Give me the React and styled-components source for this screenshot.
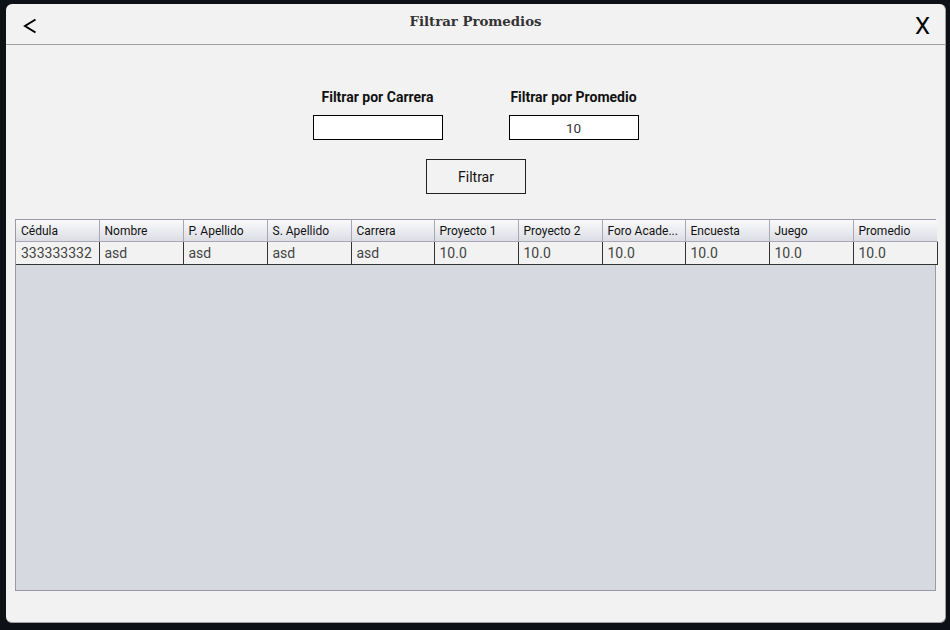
import React from "react";
import styled, { createGlobalStyle } from "styled-components";

const Global = createGlobalStyle`
  html, body { margin: 0; padding: 0; background: #0d1117; }
  body { width: 950px; height: 630px; overflow: hidden; }
`;

const Window = styled.div`
  margin: 4px 0 0 6px;
  width: 939px;
  height: 618px;
  background: #f2f2f2;
  border-radius: 6px;
  border-right: 1px solid #a0a0a0;
  border-bottom: 1px solid #a0a0a0;
  display: flex;
  flex-direction: column;
  overflow: hidden;
  font-family: Roboto, "Liberation Sans", sans-serif;
`;

const TitleBar = styled.div`
  height: 40px;
  flex: none;
  border-bottom: 1px solid #a0a0a0;
  display: flex;
  align-items: center;
  justify-content: space-between;
  padding: 0 15px 0 17px;
  position: relative;
`;

const Title = styled.div`
  position: absolute;
  left: 0;
  right: 0;
  top: 10px;
  text-align: center;
  font-family: "DejaVu Serif", "Liberation Serif", serif;
  font-weight: bold;
  font-size: 13.3px;
  color: #333;
  pointer-events: none;
`;

const IconButton = styled.button`
  border: none;
  background: none;
  padding: 0;
  display: flex;
  align-items: center;
  color: #000;
  cursor: pointer;
  margin-top: 3px;
`;

const CloseGlyph = styled.span`
  font-family: Roboto, "Liberation Sans", sans-serif;
  font-size: 24px;
  line-height: 24px;
  color: #000;
`;

const Content = styled.div`
  flex: 1;
  display: flex;
  flex-direction: column;
  align-items: center;
  padding: 44px 9px 31px 9px;
`;

const Filters = styled.div`
  display: flex;
  gap: 66px;
`;

const Field = styled.div`
  width: 130px;
  display: flex;
  flex-direction: column;
  align-items: center;
`;

const Label = styled.div`
  font-weight: bold;
  font-size: 14px;
  color: #111;
  white-space: nowrap;
  height: 17px;
  line-height: 17px;
  margin-bottom: 9px;
`;

const Input = styled.input`
  box-sizing: border-box;
  width: 130px;
  height: 25px;
  border: 1px solid #000;
  background: #fff;
  text-align: center;
  font-family: Roboto, "Liberation Sans", sans-serif;
  font-size: 13.5px;
  color: #333;
  outline: none;
`;

const Button = styled.button`
  box-sizing: border-box;
  margin-top: 19px;
  width: 100px;
  height: 35px;
  border: 1px solid #222;
  background: #f2f2f2;
  font-family: Roboto, "Liberation Sans", sans-serif;
  font-size: 14px;
  color: #111;
  margin-left: 1px;
`;

const TableBox = styled.div`
  margin-top: 25px;
  align-self: stretch;
  flex: 1;
  background: #d6d9e0;
  border: 1px solid #9a9aa6;
`;

const Table = styled.table`
  width: 921px;
  table-layout: fixed;
  border-collapse: collapse;
`;

const Th = styled.th`
  height: 21px;
  padding: 0 0 0 5px;
  text-align: left;
  font-weight: normal;
  font-size: 12px;
  color: #111;
  background: linear-gradient(#fafafc, #dcdde4);
  border-right: 1px solid #a8a8b4;
  border-bottom: 1px solid #a8a8b4;
  white-space: nowrap;
  overflow: hidden;
  text-overflow: ellipsis;
  &:last-child { border-right: none; }
`;

const Td = styled.td`
  height: 22px;
  padding: 0 0 0 5px;
  font-size: 14px;
  color: #444;
  background: #f2f2f2;
  border: 1px solid #333;
  border-top: none;
  &:first-child { border-left: none; }
  white-space: nowrap;
  overflow: hidden;
`;

const columns = ["Cédula", "Nombre", "P. Apellido", "S. Apellido", "Carrera", "Proyecto 1", "Proyecto 2", "Foro Académico", "Encuesta", "Juego", "Promedio"];
const widths = [83, 84, 84, 84, 83, 84, 84, 83, 84, 84, 84];
const rows = [["333333332", "asd", "asd", "asd", "asd", "10.0", "10.0", "10.0", "10.0", "10.0", "10.0"]];

export default function App() {
  return (
    <>
      <Global />
      <Window>
        <TitleBar>
          <IconButton>
            <svg width="14" height="16" viewBox="0 0 14 16">
              <path d="M12.5 1.5 L2 8 L12.5 14.5" fill="none" stroke="#000" strokeWidth="2" />
            </svg>
          </IconButton>
          <Title>Filtrar Promedios</Title>
          <IconButton>
            <CloseGlyph>X</CloseGlyph>
          </IconButton>
        </TitleBar>
        <Content>
          <Filters>
            <Field>
              <Label>Filtrar por Carrera</Label>
              <Input defaultValue="" />
            </Field>
            <Field>
              <Label>Filtrar por Promedio</Label>
              <Input defaultValue="10" />
            </Field>
          </Filters>
          <Button>Filtrar</Button>
          <TableBox>
            <Table>
              <colgroup>
                {widths.map((w, i) => <col key={i} style={{ width: w }} />)}
              </colgroup>
              <thead>
                <tr>{columns.map(c => <Th key={c}>{c === "Foro Académico" ? "Foro Acade..." : c}</Th>)}</tr>
              </thead>
              <tbody>
                {rows.map((r, i) => (
                  <tr key={i}>{r.map((v, j) => <Td key={j}>{v}</Td>)}</tr>
                ))}
              </tbody>
            </Table>
          </TableBox>
        </Content>
      </Window>
    </>
  );
}
